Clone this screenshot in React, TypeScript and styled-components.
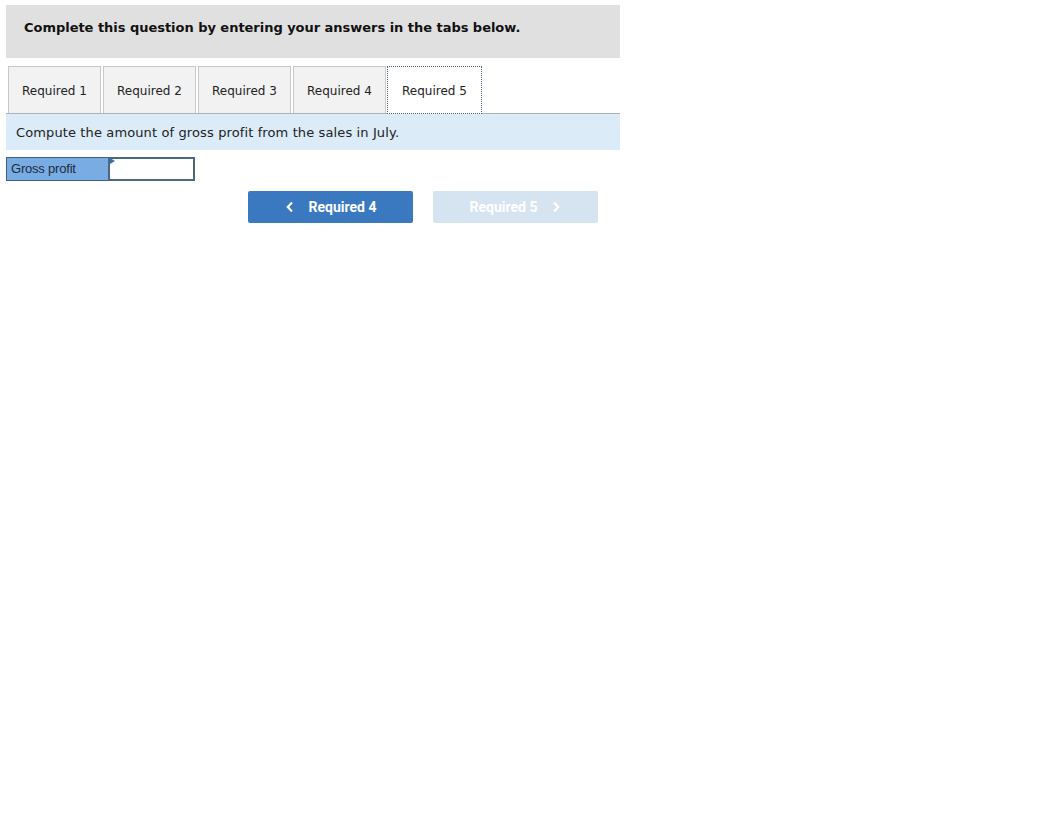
import React, { useState } from "react";
import styled, { createGlobalStyle } from "styled-components";

const GlobalStyle = createGlobalStyle`
    body {
        margin: 0;
        background: #ffffff;
        font-family: Verdana, "DejaVu Sans", sans-serif;
    }
`;

const Page = styled.div`
    width: 614px;
    padding: 5px 0 0 6px;
`;

const Header = styled.div`
    background-color: #e0e0e0;
    height: 53px;
    padding: 0 18px;
    display: flex;
    align-items: flex-start;

    h4 {
        margin: 15px 0 0;
        font-size: 13px;
        font-weight: bold;
        color: #111;
        letter-spacing: -0.03px;
    }
`;

const TabBar = styled.div`
    display: flex;
    gap: 2px;
    margin-top: 8px;
    padding-left: 2px;
    border-bottom: 1px solid #a9b3bd;
    height: 47px;
`;

const Tab = styled.button<{ $active?: boolean }>`
    width: ${(p) => (p.$active ? "95px" : "93px")};
    height: ${(p) => (p.$active ? "48px" : "47px")};
    box-sizing: border-box;
    font-family: Verdana, "DejaVu Sans", sans-serif;
    font-size: 12px;
    color: #222;
    padding: 2px 0 0;
    cursor: pointer;
    background-color: ${(p) => (p.$active ? "#ffffff" : "#f2f2f2")};
    border: ${(p) => (p.$active ? "1px dotted #4d6072" : "1px solid #c8c8c8")};
    border-bottom: ${(p) => (p.$active ? "1px dotted #4d6072" : "none")};
    margin-left: ${(p) => (p.$active ? "-1px" : "0")};
`;

const Instruction = styled.div`
    background-color: #dbebf8;
    height: 36px;
    padding: 0 10px;
    display: flex;
    align-items: center;
    font-size: 13px;
    color: #222;
    letter-spacing: 0.12px;
`;

const AnswerRow = styled.div`
    display: flex;
    margin-top: 7px;
    height: 24px;
`;

const Label = styled.div`
    width: 102px;
    box-sizing: border-box;
    background-color: #79ace3;
    border: 1px solid #3f5f7c;
    border-right: none;
    font-family: "Liberation Sans", Arial, sans-serif;
    font-size: 13px;
    color: #1b2b3d;
    padding: 3px 0 0 4px;
    letter-spacing: -0.2px;
`;

const InputWrap = styled.div`
    position: relative;
    width: 87px;

    &::before {
        content: "";
        position: absolute;
        left: 2px;
        top: 1px;
        border-left: 5px solid #3f6ea5;
        border-top: 3px solid transparent;
        border-bottom: 3px solid transparent;
    }
`;

const Input = styled.input`
    width: 100%;
    height: 24px;
    box-sizing: border-box;
    border: 2px solid #4a6784;
    outline: none;
    font-size: 13px;
    padding: 0 4px;
`;

const NavRow = styled.div`
    display: flex;
    gap: 20px;
    margin-top: 10px;
    padding-left: 242px;
`;

const NavButton = styled.button<{ $disabled?: boolean }>`
    width: 165px;
    height: 32px;
    border: none;
    border-radius: 2px;
    display: flex;
    align-items: center;
    justify-content: center;
    gap: 14px;
    font-family: Roboto, "Liberation Sans", sans-serif;
    font-weight: bold;
    font-size: 14px;
    color: #ffffff;
    background-color: ${(p) => (p.$disabled ? "#d6e3f1" : "#3a78c0")};
    cursor: ${(p) => (p.$disabled ? "default" : "pointer")};

    svg {
        width: 10px;
        height: 12px;
    }
`;

const Chevron = ({ dir }: { dir: "left" | "right" }) => (
    <svg viewBox="0 0 10 12">
        <path
            d={dir === "left" ? "M7 1.5 L2.8 6 L7 10.5" : "M3 1.5 L7.2 6 L3 10.5"}
            fill="none"
            stroke="currentColor"
            strokeWidth="2.2"
        />
    </svg>
);

const tabs = ["Required 1", "Required 2", "Required 3", "Required 4", "Required 5"];

const App = () => {
    const [active, setActive] = useState(4);

    return (
        <>
            <GlobalStyle />
            <Page>
                <Header>
                    <h4>Complete this question by entering your answers in the tabs below.</h4>
                </Header>
                <TabBar>
                    {tabs.map((t, i) => (
                        <Tab key={t} $active={i === active} onClick={() => setActive(i)}>
                            {t}
                        </Tab>
                    ))}
                </TabBar>
                <Instruction>Compute the amount of gross profit from the sales in July.</Instruction>
                <AnswerRow>
                    <Label>Gross profit</Label>
                    <InputWrap>
                        <Input type="text" />
                    </InputWrap>
                </AnswerRow>
                <NavRow>
                    <NavButton onClick={() => setActive(3)}>
                        <Chevron dir="left" />
                        Required 4
                    </NavButton>
                    <NavButton $disabled>
                        Required 5
                        <Chevron dir="right" />
                    </NavButton>
                </NavRow>
            </Page>
        </>
    );
};

export default App;
